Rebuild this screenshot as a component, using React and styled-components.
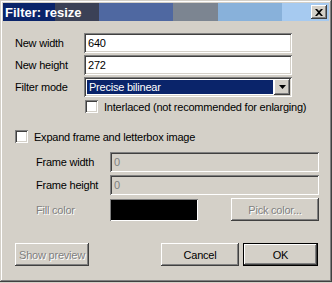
import React from "react";
import styled, { createGlobalStyle, css } from "styled-components";

const Global = createGlobalStyle`
  html, body { margin: 0; padding: 0; background: #d4d0c8; }
  body { font-family: "Liberation Sans", Arial, sans-serif; font-size: 11px; letter-spacing: -0.22px; color: #000; }
`;

const raised = css`
  box-shadow: inset -1px -1px #404040, inset 1px 1px #ffffff, inset -2px -2px #808080, inset 2px 2px #d4d0c8;
`;
const sunken = css`
  box-shadow: inset 1px 1px #808080, inset -1px -1px #ffffff, inset 2px 2px #404040, inset -2px -2px #d4d0c8;
`;

const Window = styled.div`
  width: 332px;
  height: 282px;
  box-sizing: border-box;
  padding: 3px;
  background: #d4d0c8;
  box-shadow: inset -1px -1px #404040, inset 1px 1px #d4d0c8, inset -2px -2px #808080, inset 2px 2px #ffffff;
  display: flex;
  flex-direction: column;
`;

const TitleBar = styled.div`
  height: 18px;
  display: flex;
  align-items: center;
  justify-content: space-between;
  padding: 0 2px 0 2px;
  background: linear-gradient(to right,
    #0a246a 0 52px, #3b4156 52px 96px, #4f68a1 96px 170px,
    #7c8591 170px 215px, #88b1da 215px 279px, #a6caf0 279px);
`;

const Title = styled.span`
  color: #fff;
  font-weight: bold;
  font-size: 13px;
  letter-spacing: 0;
`;

const CloseButton = styled.div`
  width: 16px;
  height: 14px;
  background: #d4d0c8;
  ${raised};
  display: flex;
  align-items: center;
  justify-content: center;
`;

const Content = styled.div`
  padding: 12px 0 0 12px;
  display: flex;
  flex-direction: column;
`;

const FieldGrid = styled.div`
  display: grid;
  grid-template-columns: ${(p) => p.$label}px ${(p) => p.$field}px;
  row-gap: ${(p) => p.$gap}px;
  align-items: center;
  margin-left: ${(p) => p.$indent || 0}px;
  margin-top: ${(p) => p.$top || 0}px;
`;

const Label = styled.span`
  white-space: nowrap;
  color: ${(p) => (p.$disabled ? "#808080" : "#000")};
  text-shadow: ${(p) => (p.$disabled ? "1px 1px #ffffff" : "none")};
`;

const TextBox = styled.div`
  height: 20px;
  box-sizing: border-box;
  padding: 0 4px;
  display: flex;
  align-items: center;
  background: ${(p) => (p.$disabled ? "#d4d0c8" : "#ffffff")};
  color: ${(p) => (p.$disabled ? "#808080" : "#000")};
  ${sunken};
`;

const Select = styled.div`
  height: 20px;
  box-sizing: border-box;
  padding: 2px;
  display: flex;
  background: #fff;
  ${sunken};
`;

const SelectValue = styled.div`
  flex: 1;
  background: #0a246a;
  color: #fff;
  display: flex;
  align-items: center;
  padding-left: 2px;
  margin: 1px;
`;

const ArrowButton = styled.div`
  width: 16px;
  background: #d4d0c8;
  ${raised};
  display: flex;
  align-items: center;
  justify-content: center;
`;

const CheckRow = styled.label`
  display: flex;
  align-items: center;
  gap: 6px;
  margin-top: ${(p) => p.$top}px;
  margin-left: ${(p) => p.$indent || 0}px;
`;

const CheckBox = styled.span`
  width: 13px;
  height: 13px;
  box-sizing: border-box;
  background: #fff;
  ${sunken};
`;

const FillRow = styled.div`
  display: flex;
  align-items: center;
  justify-content: space-between;
  height: 23px;
`;

const Swatch = styled.div`
  width: 88px;
  height: 22px;
  box-sizing: border-box;
  background: #000;
  box-shadow: inset 1px 1px #808080, inset -1px -1px #ffffff;
`;

const Button = styled.div`
  width: ${(p) => p.$w}px;
  height: ${(p) => p.$h || 23}px;
  box-sizing: border-box;
  display: flex;
  align-items: center;
  justify-content: center;
  background: #d4d0c8;
  color: ${(p) => (p.$disabled ? "#808080" : "#000")};
  text-shadow: ${(p) => (p.$disabled ? "1px 1px #ffffff" : "none")};
  ${(p) =>
    p.$default
      ? css`
          border: 1px solid #000;
          box-shadow: inset -1px -1px #404040, inset 1px 1px #ffffff, inset -2px -2px #808080, inset 2px 2px #d4d0c8;
        `
      : raised};
`;

const ButtonRow = styled.div`
  display: flex;
  align-items: center;
  margin-top: 22px;
  padding-right: 11px;
  gap: 4px;
`;

const Spacer = styled.div`
  flex: 1;
`;

export default function App() {
  return (
    <>
      <Global />
      <Window>
        <TitleBar>
          <Title>Filter: resize</Title>
          <CloseButton>
            <svg width="8" height="7" viewBox="0 0 8 7">
              <path d="M0 0h2l2 2 2-2h2L5 3.5 8 7H6L4 5 2 7H0l3-3.5z" fill="#000" />
            </svg>
          </CloseButton>
        </TitleBar>
        <Content>
          <FieldGrid $label={69} $field={208} $gap={2}>
            <Label>New width</Label>
            <TextBox>640</TextBox>
            <Label>New height</Label>
            <TextBox>272</TextBox>
            <Label>Filter mode</Label>
            <Select>
              <SelectValue>Precise bilinear</SelectValue>
              <ArrowButton>
                <svg width="7" height="4" viewBox="0 0 7 4">
                  <path d="M0 0h7L3.5 4z" fill="#000" />
                </svg>
              </ArrowButton>
            </Select>
          </FieldGrid>
          <CheckRow $top={3} $indent={70}>
            <CheckBox />
            <Label>Interlaced (not recommended for enlarging)</Label>
          </CheckRow>
          <CheckRow $top={17}>
            <CheckBox />
            <Label>Expand frame and letterbox image</Label>
          </CheckRow>
          <FieldGrid $label={74} $field={209} $gap={3} $indent={21} $top={9}>
            <Label>Frame width</Label>
            <TextBox $disabled>0</TextBox>
            <Label>Frame height</Label>
            <TextBox $disabled>0</TextBox>
            <Label $disabled>Fill color</Label>
            <FillRow>
              <Swatch />
              <Button $w={88} $h={23} $disabled>Pick color...</Button>
            </FillRow>
          </FieldGrid>
          <ButtonRow>
            <Button $w={74} $disabled>Show preview</Button>
            <Spacer />
            <Button $w={78}>Cancel</Button>
            <Button $w={75} $default>OK</Button>
          </ButtonRow>
        </Content>
      </Window>
    </>
  );
}
